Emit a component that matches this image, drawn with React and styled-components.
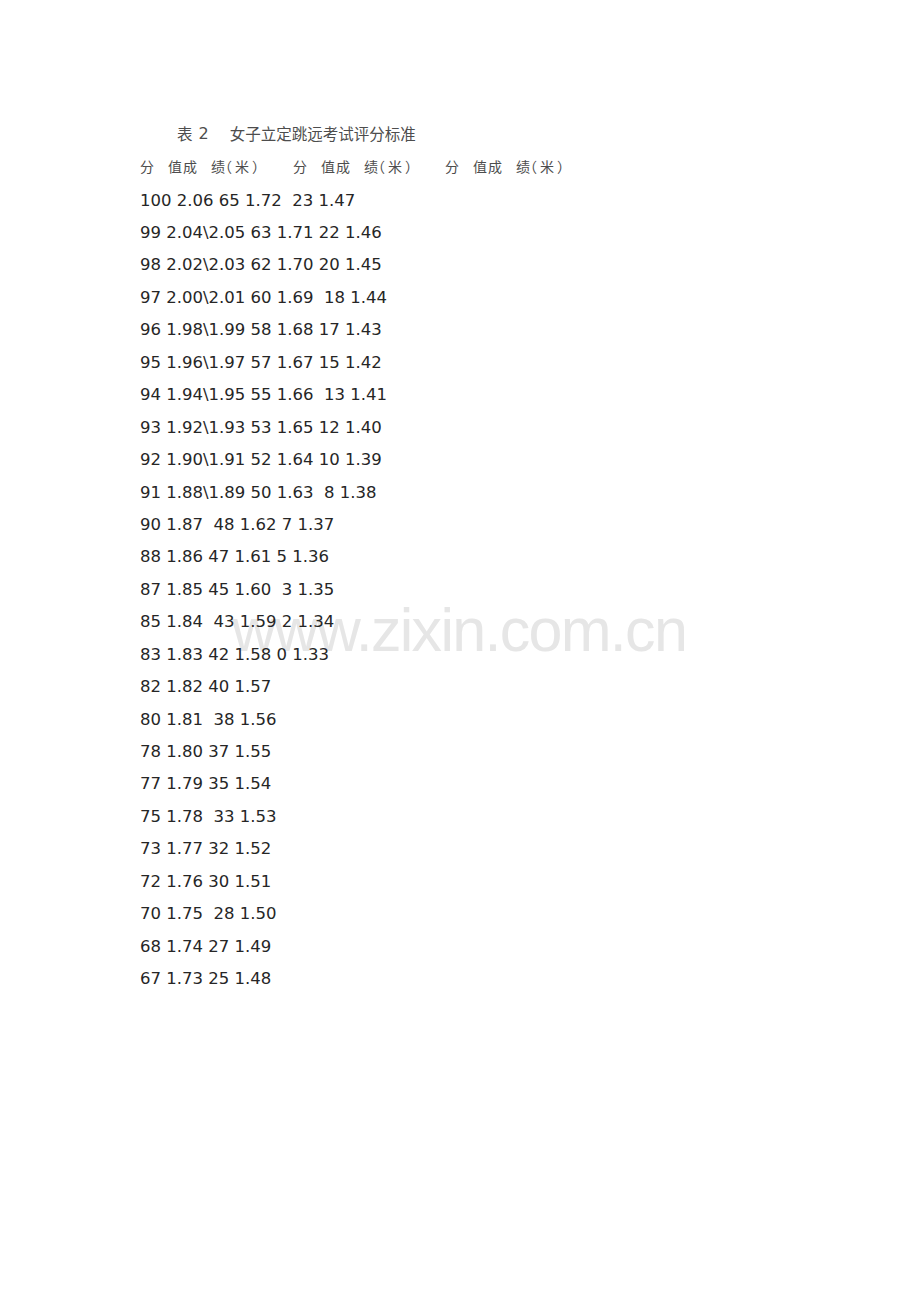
import React from "react";
import styled, { createGlobalStyle } from "styled-components";

const Global = createGlobalStyle`
  html, body { margin: 0; padding: 0; background: #ffffff; }
`;

const Page = styled.div`
  position: relative;
  width: 920px;
  height: 1302px;
  background: #ffffff;
  overflow: hidden;
  box-sizing: border-box;
  padding: 117px 0 0 140px;
`;

const Watermark = styled.div`
  position: absolute;
  left: 232px;
  top: 600px;
  font-family: "Liberation Sans", Arial, sans-serif;
  font-size: 61px;
  line-height: 1;
  letter-spacing: -1.7px;
  color: #e6e6e6;
  white-space: nowrap;
  z-index: 0;
  user-select: none;
`;

const Content = styled.div`
  position: relative;
  z-index: 1;
  display: flex;
  flex-direction: column;
`;

const Line = styled.div`
  height: 32.45px;
  display: flex;
  align-items: center;
  white-space: pre;
`;

const TitleLine = styled(Line)`
  padding-left: 37px;
  font-family: "Noto Sans CJK SC", "DejaVu Sans", sans-serif;
  font-size: 15.5px;
  color: #4d4d4d;
`;

const TitleNum = styled.span`
  font-family: "DejaVu Sans", sans-serif;
  font-size: 16px;
  margin-left: 6px;
  margin-right: 21px;
`;

const HeaderGroup = styled.div`
  display: flex;
  width: ${(p) => p.$width}px;
  font-family: "Noto Sans CJK SC", sans-serif;
  font-size: 14px;
  color: #4d4d4d;
`;

const Glyph = styled.span`
  display: inline-block;
  width: ${(p) => p.$w}px;
  margin-right: ${(p) => p.$gap || 0}px;
  text-align: left;
  font-feature-settings: ${(p) => (p.$half ? '"halt" 1' : "normal")};
`;

const DataBlock = styled.div`
  display: flex;
  flex-direction: column;
  padding-top: 2px;
`;

const DataLine = styled(Line)`
  font-family: "DejaVu Sans", Verdana, sans-serif;
  font-size: 16.5px;
  color: #262626;
`;

const rows = [
  "100 2.06 65 1.72  23 1.47",
  "99 2.04\\2.05 63 1.71 22 1.46",
  "98 2.02\\2.03 62 1.70 20 1.45",
  "97 2.00\\2.01 60 1.69  18 1.44",
  "96 1.98\\1.99 58 1.68 17 1.43",
  "95 1.96\\1.97 57 1.67 15 1.42",
  "94 1.94\\1.95 55 1.66  13 1.41",
  "93 1.92\\1.93 53 1.65 12 1.40",
  "92 1.90\\1.91 52 1.64 10 1.39",
  "91 1.88\\1.89 50 1.63  8 1.38",
  "90 1.87  48 1.62 7 1.37",
  "88 1.86 47 1.61 5 1.36",
  "87 1.85 45 1.60  3 1.35",
  "85 1.84  43 1.59 2 1.34",
  "83 1.83 42 1.58 0 1.33",
  "82 1.82 40 1.57",
  "80 1.81  38 1.56",
  "78 1.80 37 1.55",
  "77 1.79 35 1.54",
  "75 1.78  33 1.53",
  "73 1.77 32 1.52",
  "72 1.76 30 1.51",
  "70 1.75  28 1.50",
  "68 1.74 27 1.49",
  "67 1.73 25 1.48",
];

const headerGlyphs = [
  { c: "分", w: 14, gap: 14 },
  { c: "值", w: 14, gap: 1 },
  { c: "成", w: 14, gap: 14 },
  { c: "绩", w: 14 },
  { c: "（", w: 7, gap: 3, half: true },
  { c: "米", w: 14, gap: 3 },
  { c: "）", w: 7, half: true },
];

function Header() {
  const widths = [153, 152, 152];
  return (
    <Line>
      {widths.map((w, i) => (
        <HeaderGroup key={i} $width={w}>
          {headerGlyphs.map((g, j) => (
            <Glyph key={j} $w={g.w} $gap={g.gap} $half={g.half}>
              {g.c}
            </Glyph>
          ))}
        </HeaderGroup>
      ))}
    </Line>
  );
}

export default function App() {
  return (
    <>
      <Global />
      <Page>
        <Watermark>www.zixin.com.cn</Watermark>
        <Content>
          <TitleLine>
            表<TitleNum>2</TitleNum>女子立定跳远考试评分标准
          </TitleLine>
          <Header />
          <DataBlock>
            {rows.map((r, i) => (
              <DataLine key={i}>{r}</DataLine>
            ))}
          </DataBlock>
        </Content>
      </Page>
    </>
  );
}
